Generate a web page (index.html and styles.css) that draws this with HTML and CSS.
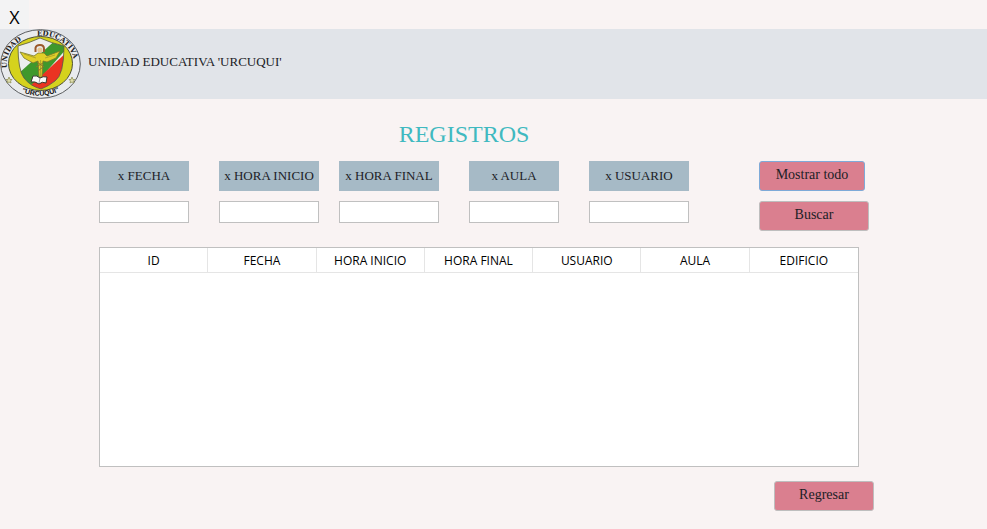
FILE: index.html
```
<!DOCTYPE html>
<html lang="es">
<head>
<meta charset="utf-8">
<title>Registros</title>
<link rel="stylesheet" href="styles.css">
</head>
<body>
<div class="titlebar"><button class="close" type="button">X</button></div>
<header class="banner">
  <svg class="crest" viewBox="0 0 82 70" aria-hidden="true">
    <defs>
      <clipPath id="shield"><path d="M18 17 Q29 14 40 9 Q51 14 64 17 Q64 46 55 52 Q49 57 41 60 Q30 57 24 49 Q18 41 18 17Z"/></clipPath>
      <path id="arc-left" d="M7.500 41 A34 28.500 0 0 1 34 7"/>
      <path id="arc-right" d="M35 7 A34 28.500 0 0 1 73 43"/>
      <path id="arc-bottom" d="M15 60 Q40 74 66 59"/>
    </defs>
    <ellipse cx="40.500" cy="35" rx="39.800" ry="34.300" fill="#e9ebee" stroke="#4c4e50" stroke-width=".9"/>
    <ellipse cx="40.500" cy="34.500" rx="32" ry="27" fill="#d5d21d" stroke="#4e5034" stroke-width="1"/>
    <g clip-path="url(#shield)">
      <path fill="#eceeed" d="M15 5h52v57H15z"/>
      <path fill="#3f982c" d="M17 46 L59 8 L68 18 L31 60Z"/>
      <path fill="#ea3322" d="M29 58 L66 24 L66 62 H30Z"/>
    </g>
    <path d="M18 17 Q29 14 40 9 Q51 14 64 17 Q64 46 55 52 Q49 57 41 60 Q30 57 24 49 Q18 41 18 17Z" fill="none" stroke="#55583c" stroke-width=".8"/>
    <path d="M20 23 L34 27 L38 24 H44 L47 27 L60 22 L56 29 L47 33 L43 32 L42 48 H39 L38 32 L33 34 L24 29Z" fill="#e0cf28" stroke="#77782b" stroke-width=".8"/>
    <path d="M24 25 L36 29 M45 29 L55 26 M40.500 31V47" fill="none" stroke="#9c942c" stroke-width=".7"/>
    <path d="M35.500 23 V19 Q36 16 40 16 Q44 16 44 20 V23" fill="none" stroke="#9b592b" stroke-width="2"/>
    <circle cx="40" cy="21" r="2.600" fill="#e7c694"/>
    <path d="M36 38 L43 34 M37 33 L44 38 M38 42 L43 38" stroke="#89752a" stroke-width="1" fill="none"/>
    <path d="M33 47 Q37 46 40 49 Q43 47 47 48 L46 54 Q42 52 39 55 Q35 52 31 53Z" fill="#fafafa" stroke="#38382f" stroke-width="1"/>
    <path d="M40 49 L39 54" stroke="#777" stroke-width=".7"/>
    <path d="M9 48 L10 50.500 L12 50.500 L10.500 52 L11 54 L9 53 L7 54 L7.500 52 L6 50.500 L8 50.500Z M72 48 L73 50.500 L75 50.500 L73.500 52 L74 54 L72 53 L70 54 L70.500 52 L69 50.500 L71 50.500Z" fill="#e0dfae" stroke="#929358" stroke-width=".8"/>
    <text class="crest-text"><textPath href="#arc-left" startOffset="2">UNIDAD</textPath></text>
    <text class="crest-text"><textPath href="#arc-right" startOffset="2">EDUCATIVA</textPath></text>
    <text class="crest-name"><textPath href="#arc-bottom" startOffset="50%" text-anchor="middle">"URCUQUI"</textPath></text>
  </svg>
  <span class="school">UNIDAD EDUCATIVA 'URCUQUI'</span>
</header>
<main class="content">
  <h1 class="title">REGISTROS</h1>
  <form class="search">
    <div class="field"><label for="fecha">x FECHA</label><input id="fecha" type="text"></div>
    <div class="field"><label for="inicio">x HORA INICIO</label><input id="inicio" type="text"></div>
    <div class="field"><label for="final">x HORA FINAL</label><input id="final" type="text"></div>
    <div class="field"><label for="aula">x AULA</label><input id="aula" type="text"></div>
    <div class="field"><label for="usuario">x USUARIO</label><input id="usuario" type="text"></div>
    <div class="actions">
      <button class="button button-all" type="button">Mostrar todo</button>
      <button class="button" type="button">Buscar</button>
    </div>
  </form>
  <div class="records">
    <table>
      <thead><tr><th>ID</th><th>FECHA</th><th>HORA INICIO</th><th>HORA FINAL</th><th>USUARIO</th><th>AULA</th><th>EDIFICIO</th></tr></thead>
      <tbody></tbody>
    </table>
  </div>
  <div class="footer"><button class="button button-back" type="button">Regresar</button></div>
</main>
</body>
</html>
```
FILE: styles.css
```
* { box-sizing: border-box; }

body {
  margin: 0;
  min-height: 100vh;
  display: flex;
  flex-direction: column;
  background: #f9f3f3;
  color: #202126;
  font-family: "Liberation Serif", serif;
  font-size: 14px;
}

button, input { font: inherit; color: inherit; }

.titlebar { display: flex; }

.close {
  width: 29px;
  height: 29px;
  padding: 4px 0 0;
  border: 0;
  background: #f3f3f4;
  color: #000;
  font: 18px/24px "Open Sans", sans-serif;
}

.banner {
  display: flex;
  align-items: center;
  gap: 6px;
  height: 70px;
  background: #e1e4e9;
}

.crest { width: 82px; height: 70px; flex: none; overflow: visible; }

.crest-text { font: bold 7px "DejaVu Serif", serif; fill: #222; }

.crest-name { font: bold 7px "Liberation Sans", sans-serif; fill: #111; }

.school { padding-bottom: 5px; font-size: 13px; }

.content {
  flex: 1;
  display: flex;
  flex-direction: column;
  padding: 20px 113px 18px 99px;
}

.title {
  margin: 0 45px 12px 0;
  color: #40b9c0;
  font-size: 24px;
  font-weight: 400;
  line-height: 30px;
  text-align: center;
}

.search {
  display: grid;
  grid-template-columns: 120fr 120fr 130fr 120fr 170fr 115fr;
  margin-bottom: 16px;
}

.field {
  display: flex;
  flex-direction: column;
  gap: 10px;
  margin-right: 30px;
}

.field:nth-child(2) { margin-right: 20px; }

.field:nth-child(5) { margin-right: 70px; }

.field label {
  background: #a6bac6;
  font-size: 13px;
  line-height: 30px;
  text-align: center;
  white-space: nowrap;
}

.field input {
  width: 100%;
  height: 22px;
  padding: 0 4px;
  border: 1px solid #c0c0c0;
  background: #fff;
}

.actions {
  display: flex;
  flex-direction: column;
  gap: 10px;
  margin-right: 5px;
}

.button {
  height: 30px;
  padding: 0 0 2px;
  border: 1px solid #bebebe;
  border-radius: 3px;
  background: #da7f8f;
}

.button-all { margin-right: 4px; border-color: #7eaad8; }

.records {
  flex: 1;
  min-height: 100px;
  margin-right: 15px;
  border: 1px solid #c0c0c0;
  background: #fff;
}

.records table {
  width: 100%;
  table-layout: fixed;
  border-collapse: separate;
  border-spacing: 0;
}

.records th {
  height: 25px;
  padding: 2px 0 0;
  border-right: 1px solid #e5e5e5;
  border-bottom: 1px solid #e5e5e5;
  color: #000;
  font: 12px/16px "Open Sans", sans-serif;
}

.records th:last-child { border-right: 0; }

.footer {
  display: flex;
  justify-content: flex-end;
  margin-top: 14px;
}

.button-back { width: 100px; }
```
